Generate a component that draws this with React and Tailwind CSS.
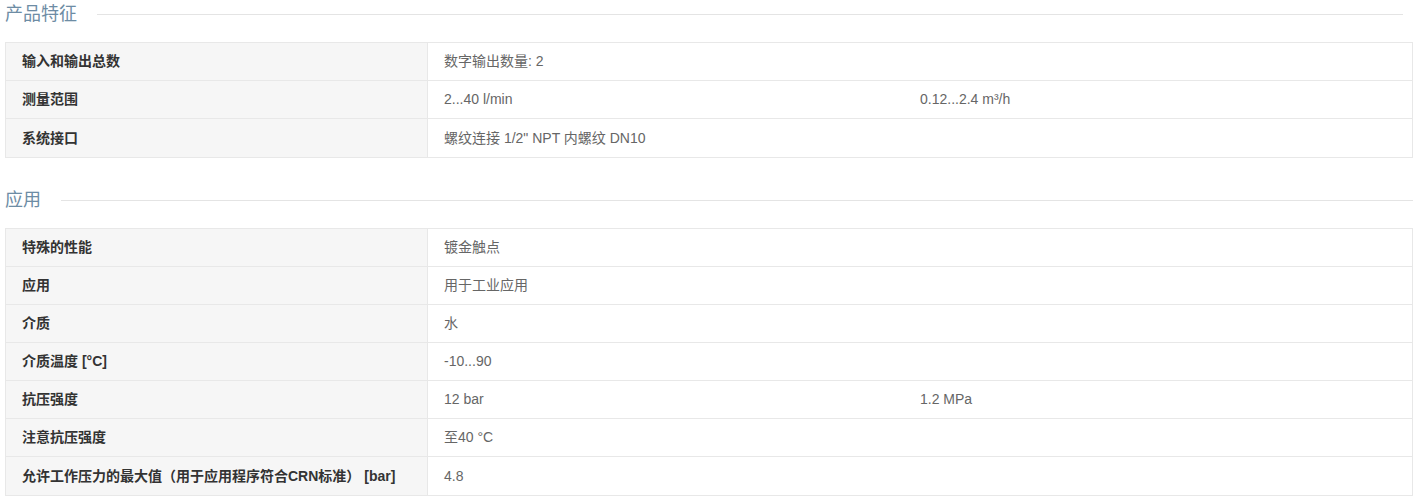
const SECTIONS = [
  {
    title: "产品特征",
    lineRight: "mr-[15px]",
    mt: "mt-0",
    rows: [
      ["输入和输出总数", "数字输出数量: 2"],
      ["测量范围", "2...40 l/min", "0.12...2.4 m³/h"],
      ["系统接口", "螺纹连接 1/2\" NPT 内螺纹 DN10"],
    ],
  },
  {
    title: "应用",
    lineRight: "mr-[5px]",
    mt: "mt-[28px]",
    rows: [
      ["特殊的性能", "镀金触点"],
      ["应用", "用于工业应用"],
      ["介质", "水"],
      ["介质温度 [°C]", "-10...90"],
      ["抗压强度", "12 bar", "1.2 MPa"],
      ["注意抗压强度", "至40 °C"],
      ["允许工作压力的最大值（用于应用程序符合CRN标准） [bar]", "4.8"],
    ],
  },
];

function Section({ section }) {
  return (
    <section className={section.mt}>
      <div className="flex items-center h-[28px] pl-[5px]">
        <h2 className="text-[18px] leading-none text-[#6d8ca4] font-normal">{section.title}</h2>
        <div className={`flex-1 ml-[20px] h-px bg-[#e4e4e4] ${section.lineRight}`} />
      </div>
      <div className="mt-[14px] mx-[5px] border border-[#e8e8e8]">
        {section.rows.map((row, i) => (
          <div
            key={i}
            className={`grid grid-cols-[422px_492px_1fr] h-[38px] ${i < section.rows.length - 1 ? "border-b border-[#e8e8e8]" : ""}`}
          >
            <div className="flex items-center pl-[16px] bg-[#f6f6f6] border-r border-[#e8e8e8] text-[14px] font-bold text-[#333]">
              {row[0]}
            </div>
            <div className={`flex items-center pl-[16px] text-[14px] text-[#666] ${row[2] ? "" : "col-span-2"}`}>
              {row[1]}
            </div>
            {row[2] && (
              <div className="flex items-center text-[14px] text-[#666]">{row[2]}</div>
            )}
          </div>
        ))}
      </div>
    </section>
  );
}

export default function App() {
  return (
    <main className="w-[1418px] bg-white font-['Liberation_Sans','Noto_Sans_CJK_SC',sans-serif]">
      {SECTIONS.map((s) => (
        <Section key={s.title} section={s} />
      ))}
    </main>
  );
}
